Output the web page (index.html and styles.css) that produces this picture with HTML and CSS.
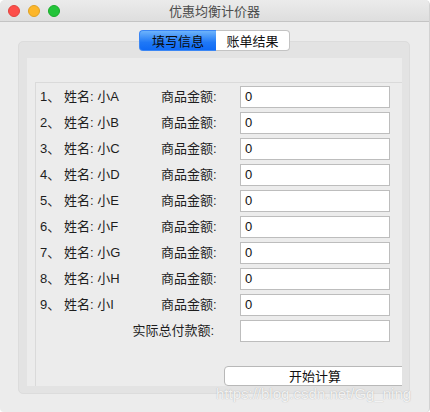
FILE: index.html
```html
<!DOCTYPE html>
<html lang="zh">
<head>
<meta charset="utf-8">
<title>优惠均衡计价器</title>
<link rel="stylesheet" href="styles.css">
</head>
<body>
<div class="window">
  <div class="titlebar">
    <div class="lights">
      <span class="light red"></span>
      <span class="light yellow"></span>
      <span class="light green"></span>
    </div>
    <div class="title">优惠均衡计价器</div>
    <div></div>
  </div>
  <div class="content">
    <div class="tabs">
      <div class="tab active">填写信息</div>
      <div class="tab">账单结果</div>
    </div>
    <div class="box">
      <div class="panel">
        <div class="frame">
          <div class="grid">
            <div class="num">1、</div><div class="name">姓名: 小A</div><div class="lbl">商品金额:</div><div class="field">0</div>
            <div class="num">2、</div><div class="name">姓名: 小B</div><div class="lbl">商品金额:</div><div class="field">0</div>
            <div class="num">3、</div><div class="name">姓名: 小C</div><div class="lbl">商品金额:</div><div class="field">0</div>
            <div class="num">4、</div><div class="name">姓名: 小D</div><div class="lbl">商品金额:</div><div class="field">0</div>
            <div class="num">5、</div><div class="name">姓名: 小E</div><div class="lbl">商品金额:</div><div class="field">0</div>
            <div class="num">6、</div><div class="name">姓名: 小F</div><div class="lbl">商品金额:</div><div class="field">0</div>
            <div class="num">7、</div><div class="name">姓名: 小G</div><div class="lbl">商品金额:</div><div class="field">0</div>
            <div class="num">8、</div><div class="name">姓名: 小H</div><div class="lbl">商品金额:</div><div class="field">0</div>
            <div class="num">9、</div><div class="name">姓名: 小I</div><div class="lbl">商品金额:</div><div class="field">0</div>
            <div class="total-lbl">实际总付款额:</div><div class="field"></div>
          </div>
          <div class="actions">
            <div class="btn">开始计算</div>
          </div>
        </div>
      </div>
    </div>
  </div>
  <div class="watermark">https://blog.csdn.net/Gg_ning</div>
</div>
</body>
</html>
```

FILE: styles.css
```css
html, body {
  margin: 0;
  padding: 0;
  background: #ffffff;
}
body {
  font-family: "Liberation Sans", "Noto Sans CJK SC", sans-serif;
  font-size: 13px;
  color: #1e1e1e;
}
.window {
  position: relative;
  width: 430px;
  height: 412px;
  background: #ececec;
  border-radius: 5px 5px 4px 4px;
  overflow: hidden;
  box-sizing: border-box;
  border-right: 1px solid #d2d2d2;
}
.titlebar {
  height: 21px;
  border-bottom: 1px solid #c4c4c4;
  background: linear-gradient(#ebebeb, #dedede);
  display: grid;
  grid-template-columns: 1fr auto 1fr;
  align-items: center;
}
.lights {
  display: flex;
  gap: 8px;
  padding-left: 8px;
}
.light {
  width: 12px;
  height: 12px;
  border-radius: 50%;
  box-sizing: border-box;
}
.red { background: #fd4e4a; border: 1px solid #e0443e; }
.yellow { background: #fdb629; border: 1px solid #dea123; }
.green { background: #23c43a; border: 1px solid #1aab2b; }
.title {
  font-family: "Noto Sans CJK SC", sans-serif;
  font-size: 13px;
  color: #4d4d4d;
  line-height: 21px;
}
.content {
  padding-top: 8px;
}
.tabs {
  position: relative;
  z-index: 1;
  display: flex;
  justify-content: center;
}
.tab {
  height: 19px;
  line-height: 19px;
  border: 1px solid #c3c3c3;
  background: #ffffff;
  font-family: "Noto Sans CJK SC", sans-serif;
  font-size: 13px;
  color: #111;
  text-align: center;
  width: 73px;
}
.tab.active {
  width: 76px;
  border-color: #3b86f4;
  border-right: none;
  border-radius: 4px 0 0 4px;
  background: linear-gradient(#6db3fb, #1f78f6 60%, #0f6af5);
  color: #0a0a0a;
}
.tab:last-child {
  border-left: none;
  border-radius: 0 4px 4px 0;
}
.box {
  margin: -10px 19px 0 18px;
  height: 353px;
  box-sizing: border-box;
  border: 1px solid #dcdcdc;
  border-radius: 5px;
  background: #e3e3e3;
  padding: 16px 7px 7px 8px;
}
.panel {
  height: 100%;
  background: #ececec;
  overflow: hidden;
  padding: 24px 0 0 8px;
  box-sizing: border-box;
}
.frame {
  width: 400px;
  height: 360px;
  border-top: 1px solid #dadada;
  border-left: 1px solid #dadada;
  padding: 3px 0 0 4px;
  box-sizing: border-box;
}
.grid {
  display: grid;
  grid-template-columns: 24px 97px 79px 150px;
  grid-auto-rows: 22px;
  row-gap: 4px;
  align-items: center;
}
.num, .name, .lbl, .total-lbl {
  line-height: 22px;
  white-space: nowrap;
}
.total-lbl {
  grid-column: 1 / 4;
  text-align: right;
  padding-right: 26px;
}
.field {
  height: 22px;
  box-sizing: border-box;
  border: 1px solid #bdbdbd;
  background: #ffffff;
  padding-left: 4px;
  line-height: 20px;
  font-size: 13px;
  color: #111;
}
.actions {
  padding: 24px 0 0 184px;
}
.btn {
  width: 182px;
  height: 20px;
  box-sizing: border-box;
  border: 1px solid #b8b8b8;
  border-radius: 4px;
  background: #ffffff;
  text-align: center;
  line-height: 18px;
  font-family: "Noto Sans CJK SC", sans-serif;
  font-size: 13px;
  color: #111;
}
.watermark {
  position: absolute;
  left: 216px;
  top: 386px;
  font-family: "Liberation Sans", sans-serif;
  font-size: 15px;
  line-height: 15px;
  color: rgba(255, 255, 255, 0.85);
  text-shadow: 0 0 1px rgba(120, 120, 120, 0.6);
  white-space: nowrap;
}
```
